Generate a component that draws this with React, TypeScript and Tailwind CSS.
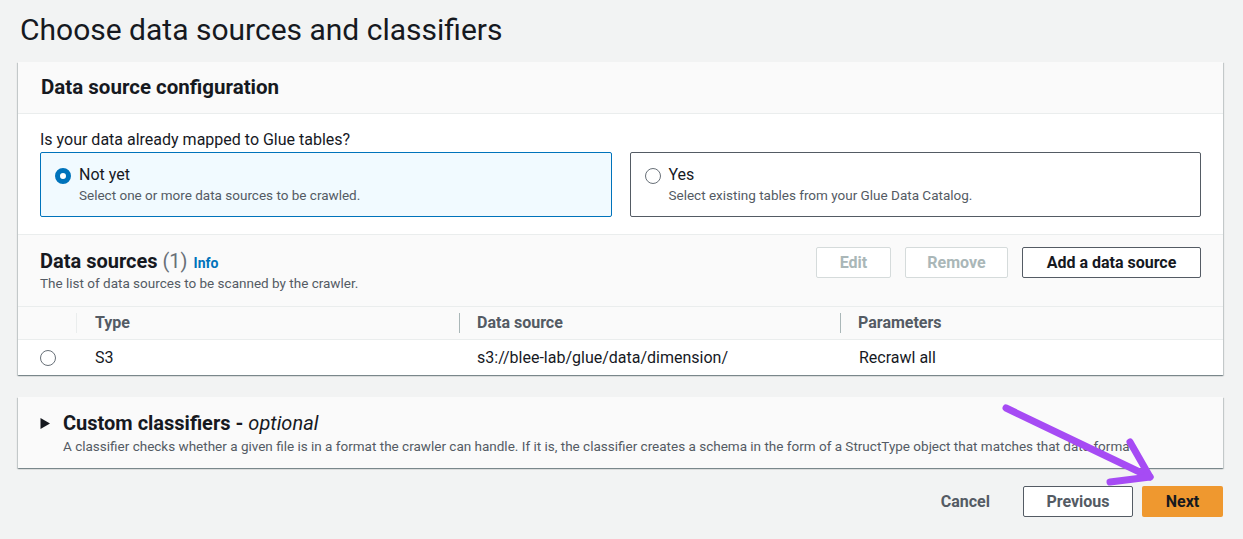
import React from "react";

// Wizard step: data sources and classifiers
type Row = { type: string; source: string; params: string };

const rows: Row[] = [
  { type: "S3", source: "s3://blee-lab/glue/data/dimension/", params: "Recrawl all" },
];

const Radio: React.FC<{ checked?: boolean }> = ({ checked }) =>
  checked ? (
    <span className="inline-block w-[16px] h-[16px] rounded-full border-[5px] border-[#0073bb] bg-white shrink-0" />
  ) : (
    <span className="inline-block w-[16px] h-[16px] rounded-full border-[1.5px] border-[#687078] bg-white shrink-0" />
  );

const Tile: React.FC<{ checked?: boolean; title: string; desc: string }> = ({
  checked,
  title,
  desc,
}) => (
  <div
    className={
      checked
        ? "h-[65px] rounded-[2px] border border-[#0073bb] bg-[#f1faff] pl-[14px] pt-[12px] flex gap-[8px]"
        : "h-[65px] rounded-[2px] border border-[#545b64] bg-white pl-[14px] pt-[12px] flex gap-[8px]"
    }>
    <div className="pt-[2px]">
      <Radio checked={checked} />
    </div>
    <div>
      <div className="text-[16px] leading-[20px] text-[#16191f]">{title}</div>
      <div className="text-[13.5px] leading-[20px] text-[#545b64]">{desc}</div>
    </div>
  </div>
);

const ColHead: React.FC<{ label: string; sep?: boolean }> = ({ label, sep }) => (
  <div className="relative flex items-center pl-[18px] font-bold text-[16px] text-[#545b64]">
    {sep && <span className="absolute left-0 top-[6px] bottom-[6px] w-px bg-[#aab7b8]" />}
    {label}
  </div>
);

const shadow =
  "shadow-[0_1px_1px_0_rgba(0,28,36,0.3),1px_1px_1px_0_rgba(0,28,36,0.15),-1px_1px_1px_0_rgba(0,28,36,0.15)]";

export default function App() {
  return (
    <div className="relative min-h-screen bg-[#f2f3f3] pl-[18px] pr-[20px] pt-[12px] font-['Roboto',sans-serif] text-[#16191f]">
      <h1 className="ml-[2px] text-[30px] leading-[36px] font-normal">
        Choose data sources and classifiers
      </h1>

      <div className={`mt-[14px] bg-white ${shadow}`}>
        <div className="h-[52px] px-[23px] flex items-center bg-[#fafafa] border-b border-[#eaeded]">
          <h2 className="text-[20.5px] font-bold">Data source configuration</h2>
        </div>
        <div className="px-[22px] pt-[15px] pb-[17px]">
          <div className="text-[16px] leading-[22px] mb-[1px]">
            Is your data already mapped to Glue tables?
          </div>
          <div className="grid grid-cols-2 gap-[18px]">
            <Tile checked title="Not yet" desc="Select one or more data sources to be crawled." />
            <Tile title="Yes" desc="Select existing tables from your Glue Data Catalog." />
          </div>
        </div>

        <div className="h-[72px] px-[22px] pt-[12px] flex justify-between bg-[#fafafa] border-t border-[#eaeded]">
          <div className="pt-[2px]">
            <div className="flex items-baseline gap-[6px]">
              <h2 className="text-[20px] leading-[24px] font-bold">
                Data sources <span className="font-normal text-[#687078]">(1)</span>
              </h2>
              <a className="text-[14px] font-bold text-[#0073bb]">Info</a>
            </div>
            <div className="text-[13.5px] leading-[18px] text-[#545b64]">
              The list of data sources to be scanned by the crawler.
            </div>
          </div>
          <div className="flex gap-[14px]">
            <button className="w-[75px] h-[31px] rounded-[2px] border border-[#d5dbdb] bg-white text-[16px] font-bold text-[#aab7b8]">
              Edit
            </button>
            <button className="w-[103px] h-[31px] rounded-[2px] border border-[#d5dbdb] bg-white text-[16px] font-bold text-[#aab7b8]">
              Remove
            </button>
            <button className="w-[179px] h-[31px] rounded-[2px] border border-[#545b64] bg-white text-[16px] font-bold text-[#16191f]">
              Add a data source
            </button>
          </div>
        </div>

        <div className="grid grid-cols-[59px_382px_381px_1fr] h-[34px] bg-[#fafafa] border-t border-b border-[#eaeded]">
          <div className="relative">
            <span className="absolute right-0 top-[6px] bottom-[6px] w-px bg-[#eaeded]" />
          </div>
          <ColHead label="Type" />
          <ColHead label="Data source" sep />
          <ColHead label="Parameters" sep />
        </div>
        {rows.map((r) => (
          <div
            key={r.source}
            className="grid grid-cols-[59px_382px_381px_1fr] h-[35px] items-center text-[16px]">
            <div className="flex justify-center">
              <Radio />
            </div>
            <div className="pl-[18px]">{r.type}</div>
            <div className="pl-[18px]">{r.source}</div>
            <div className="pl-[19px]">{r.params}</div>
          </div>
        ))}
      </div>

      <div className={`mt-[22px] h-[71px] bg-[#fafafa] pl-[22px] pt-[13px] flex gap-[13px] ${shadow}`}>
        <svg width="10" height="11" viewBox="0 0 10 11" className="mt-[8px] shrink-0">
          <path d="M0.5 0 L10 5.5 L0.5 11 Z" fill="#16191f" />
        </svg>
        <div>
          <div className="text-[20px] leading-[26px] font-bold">
            Custom classifiers - <i className="font-normal">optional</i>
          </div>
          <div className="text-[13.5px] leading-[20px] text-[#545b64]">
            A classifier checks whether a given file is in a format the crawler can handle. If it is,
            the classifier creates a schema in the form of a StructType object that matches that data
            format.
          </div>
        </div>
      </div>

      <div className="mt-[18px] flex justify-end items-center">
        <button className="h-[31px] px-[20px] mr-[13px] text-[16px] font-bold text-[#545b64]">
          Cancel
        </button>
        <button className="w-[110px] h-[31px] mr-[9px] rounded-[2px] border border-[#545b64] bg-white text-[16px] font-bold text-[#545b64]">
          Previous
        </button>
        <button className="w-[81px] h-[31px] rounded-[2px] bg-[#ef982f] text-[16px] font-bold text-[#16191f]">
          Next
        </button>
      </div>

      <svg
        className="absolute left-0 top-0 pointer-events-none"
        width="1243"
        height="539"
        viewBox="0 0 1243 539">
        <g stroke="#a64bf4" strokeWidth="7" strokeLinecap="round" strokeLinejoin="round" fill="none">
          <path d="M1006 408 L1150 477" />
          <path d="M1130 442 L1150 477 L1110 482" />
        </g>
      </svg>
    </div>
  );
}
